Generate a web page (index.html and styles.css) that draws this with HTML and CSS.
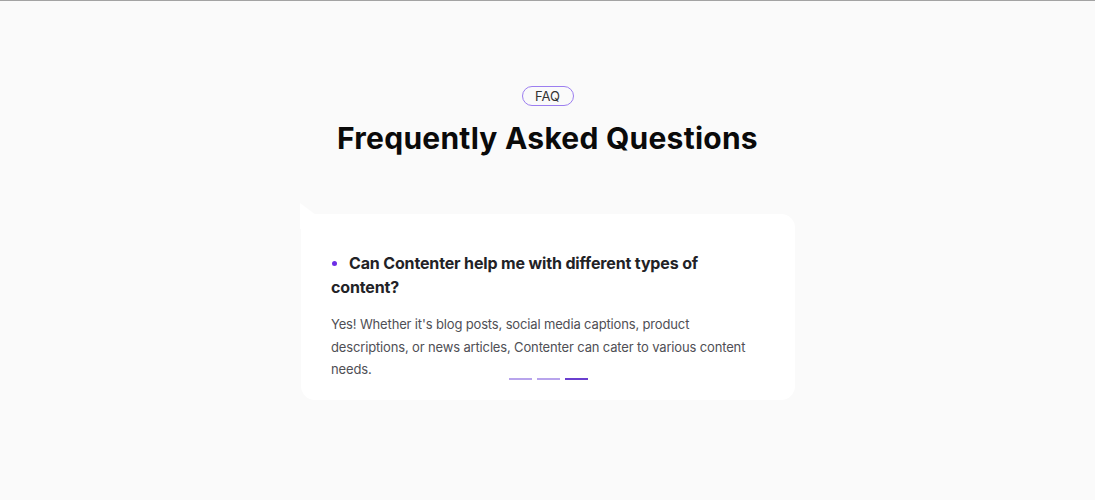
FILE: index.html
```
<!DOCTYPE html>
<html>
<head>
<meta charset="utf-8">
<link rel="stylesheet" href="styles.css">
</head>
<body>
<div class="topline"></div>
<section class="faq">
  <span class="pill">FAQ</span>
  <h1 class="title">Frequently Asked Questions</h1>
  <div class="card">
    <h3 class="question"><span class="dot"></span>Can Contenter help me with different types of content?</h3>
    <p class="answer">Yes! Whether it's blog posts, social media captions, product descriptions, or news articles, Contenter can cater to various content needs.</p>
    <div class="dashes">
      <span class="dash"></span>
      <span class="dash"></span>
      <span class="dash active"></span>
    </div>
  </div>
</section>
</body>
</html>
```
FILE: styles.css
```
* { box-sizing: border-box; }
html, body { margin: 0; padding: 0; }
body {
  background: #fafafa;
  font-family: Inter, "Noto Sans", sans-serif;
  width: 1095px;
  height: 500px;
  overflow: hidden;
}
.topline {
  height: 2px;
  background: #fafafa;
  border-top: 1px solid #a3a3a3;
}
.faq {
  display: flex;
  flex-direction: column;
  align-items: center;
  padding-top: 84px;
}
.pill {
  display: inline-flex;
  align-items: center;
  justify-content: center;
  width: 52px;
  height: 20px;
  border: 1px solid #9c7ef0;
  border-radius: 10px;
  font-size: 13px;
  color: #333;
  line-height: 1;
}
.title {
  margin: 14px 0 0;
  font-size: 30px;
  font-weight: 700;
  color: #0a0a0a;
  letter-spacing: 0.25px;
  line-height: 36px;
}
.card {
  position: relative;
  margin-top: 58px;
  margin-left: 1px;
  width: 494px;
  background: #ffffff;
  border-radius: 14px;
  padding: 37px 30px 19px 30px;
}
.card::before {
  content: "";
  position: absolute;
  left: -1px;
  top: -11px;
  width: 16px;
  height: 26px;
  background: #ffffff;
  clip-path: polygon(0 0, 100% 46%, 100% 100%, 0 100%);
}
.question {
  margin: 0;
  font-size: 16px;
  font-weight: 700;
  line-height: 24px;
  color: #222226;
  letter-spacing: -0.15px;
}
.dot {
  display: inline-block;
  width: 5px;
  height: 5px;
  border-radius: 50%;
  background: #6d2ee6;
  vertical-align: middle;
  margin: 0 12px 3px 1px;
}
.answer {
  margin: 14px 0 0;
  font-size: 13px;
  line-height: 22.5px;
  color: #4f4f55;
  letter-spacing: -0.15px;
}
.dashes {
  position: absolute;
  left: 0;
  right: 0;
  bottom: 20px;
  display: flex;
  justify-content: center;
  gap: 5px;
}
.dash {
  width: 23px;
  height: 2px;
  background: #b8a4ec;
}
.dash.active {
  background: #6a3fcf;
}
```
